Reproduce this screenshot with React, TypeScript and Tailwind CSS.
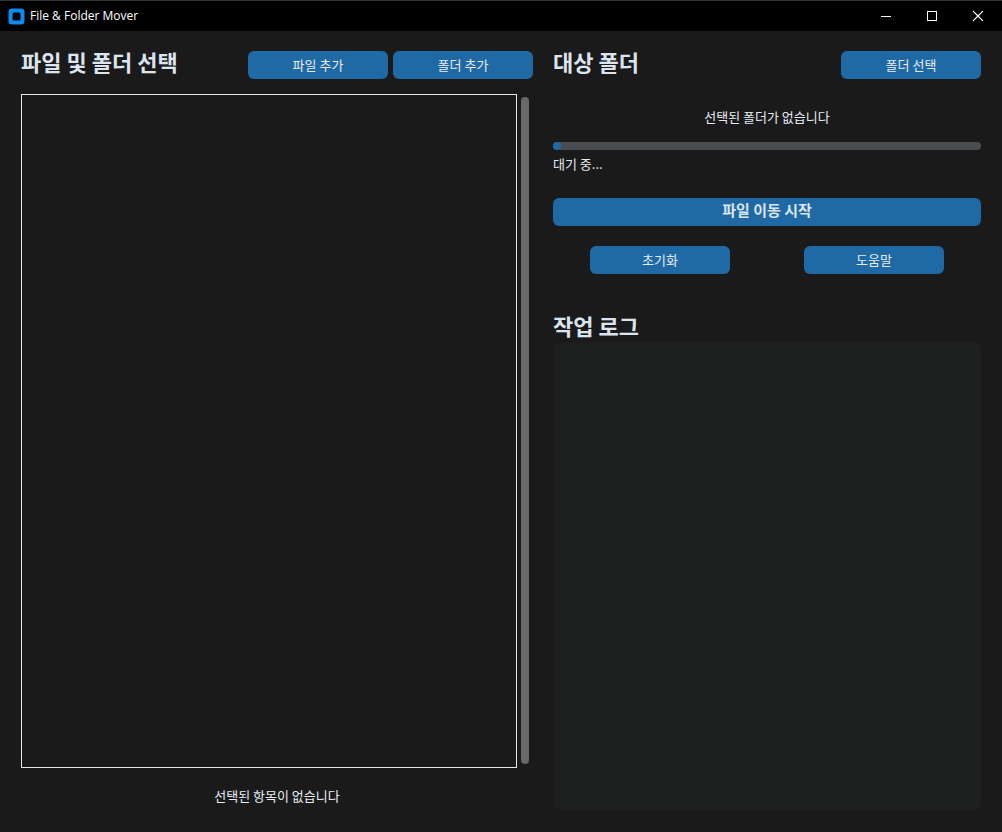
const kr = "font-['Noto_Sans_CJK_KR','Noto_Sans',sans-serif]";

function Btn({ label, className = "" }: { label: string; className?: string }) {
  return (
    <button className={`flex h-7 w-[140px] items-center justify-center rounded-md bg-[#1f6aa5] pb-px text-[13px] font-normal text-[#e6ecf3] ${className}`}>
      {label}
    </button>
  );
}

export default function App() {
  return (
    <div className={`flex h-[832px] w-[1002px] flex-col overflow-hidden bg-[#1a1a1a] ${kr}`}>
      <header className="flex h-[31px] shrink-0 items-center justify-between border-t border-[#333] bg-black pl-2 pr-px">
        <div className="flex items-center gap-[5px]">
          <svg width="17" height="17" viewBox="0 0 17 17">
            <rect width="16" height="16" x="0.5" y="0.5" rx="3.5" fill="#0a8cf0" />
            <rect width="8" height="8" x="4.5" y="4.5" rx="1.5" fill="#000" />
          </svg>
          <span className="font-['Open_Sans',sans-serif] text-[12px] text-white">File &amp; Folder Mover</span>
        </div>
        <div className="flex items-center">
          <div className="flex h-[30px] w-[46px] items-center justify-center">
            <div className="h-px w-[10px] bg-white" />
          </div>
          <div className="flex h-[30px] w-[46px] items-center justify-center">
            <div className="size-[10px] border border-white" />
          </div>
          <div className="flex h-[30px] w-[46px] items-center justify-center">
            <svg width="12" height="12" viewBox="0 0 12 12" stroke="#fff" strokeWidth="1.1">
              <path d="M1 1l10 10M11 1L1 11" />
            </svg>
          </div>
        </div>
      </header>
      <main className="flex flex-1 gap-[23px] pl-[21px] pr-[21px] pt-5">
        <section className="flex w-[509px] flex-col">
          <div className="flex h-7 items-center justify-between">
            <h1 className="pb-[8px] text-[22px] font-bold leading-7 text-[#dce4ee]">파일 및 폴더 선택</h1>
            <div className="mr-[-3px] flex gap-[5px]">
              <Btn label="파일 추가" />
              <Btn label="폴더 추가" />
            </div>
          </div>
          <div className="mt-[15px] flex h-[674px] gap-1">
            <div className="w-[496px] border border-[#e6e6e6]" />
            <div className="mt-[3px] h-[667px] w-[8px] rounded-full bg-[#696969]" />
          </div>
          <p className="mt-[19px] pl-[3px] text-center text-[13px] font-normal leading-[18px] text-[#e6ecf3]">선택된 항목이 없습니다</p>
        </section>
        <section className="flex w-[428px] flex-col">
          <div className="flex h-7 items-center justify-between">
            <h2 className="pb-[8px] text-[22px] font-bold leading-7 text-[#dce4ee]">대상 폴더</h2>
            <Btn label="폴더 선택" />
          </div>
          <p className="mt-[29px] text-center text-[13px] font-normal leading-[18px] text-[#e6ecf3]">선택된 폴더가 없습니다</p>
          <div className="mt-4 h-2 rounded-full bg-[#4a4d50]">
            <div className="h-2 w-2 rounded-full bg-[#1f6aa5]" />
          </div>
          <p className="mt-[5px] text-[13px] font-normal leading-[18px] text-[#e6ecf3]">대기 중...</p>
          <button className="mt-[25px] flex h-7 items-center justify-center rounded-md bg-[#1f6aa5] pb-[3px] text-[15px] font-bold text-[#dce4ee]">파일 이동 시작</button>
          <div className="mt-5 flex justify-around">
            <Btn label="초기화" />
            <Btn label="도움말" />
          </div>
          <h2 className="mt-[37px] text-[22px] font-bold leading-7 text-[#dce4ee]">작업 로그</h2>
          <div className="mt-[3px] h-[468px] rounded-md bg-[#1d1e1e]" />
        </section>
      </main>
    </div>
  );
}
